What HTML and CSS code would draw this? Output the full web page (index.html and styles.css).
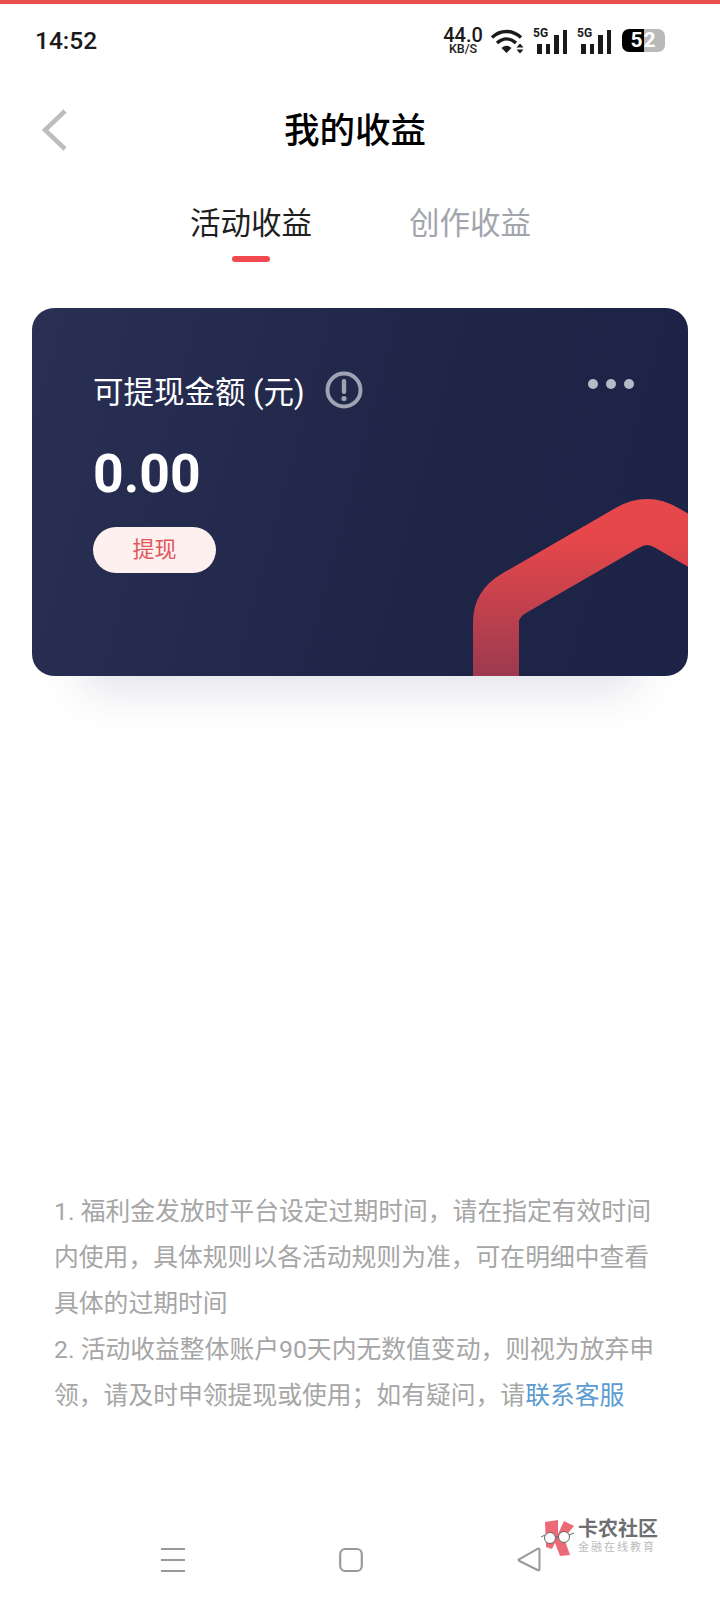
FILE: index.html
```html
<!DOCTYPE html>
<html lang="zh-CN">
<head>
    <meta charset="UTF-8">
    <meta name="viewport" content="width=device-width, initial-scale=1.0">
    <title>我的收益</title>
    <link rel="stylesheet" href="styles.css">
</head>
<body>
    <div class="app">
        <div class="status-bar">
            <span class="time">14:52</span>
            <div class="status-icons">
                <div class="net-speed">
                    <span class="net-value">44.0</span>
                    <span class="net-unit">KB/S</span>
                </div>
                <svg class="wifi" width="35" height="26" viewBox="0 0 35 26">
                    <path d="M2 9.5C10.500 1.500 22 1.500 31 9.500" fill="none" stroke="#1a1a1a" stroke-width="3.400"/>
                    <path d="M7 15C13 9.500 20 9.500 26 15" fill="none" stroke="#1a1a1a" stroke-width="3.400"/>
                    <path d="M11.500 20C15 17 18 17 21.500 20L16.500 25Z" fill="#1a1a1a"/>
                    <path d="M30 15.500L33.500 19.500H26.500ZM30 25.500L33.500 21.500H26.500Z" fill="#1a1a1a"/>
                </svg>
                <div class="signal">
                    <span class="signal-label">5G</span>
                    <div class="bars">
                        <i class="bar bar-1"></i><i class="bar bar-1"></i><i class="bar bar-2"></i><i class="bar bar-3"></i>
                    </div>
                </div>
                <div class="signal">
                    <span class="signal-label">5G</span>
                    <div class="bars">
                        <i class="bar bar-1"></i><i class="bar bar-1"></i><i class="bar bar-2"></i><i class="bar bar-3"></i>
                    </div>
                </div>
                <div class="battery">52</div>
            </div>
        </div>

        <div class="nav-bar">
            <svg class="back" width="26" height="44" viewBox="0 0 26 44">
                <path d="M23 3L3 22L23 41" fill="none" stroke="#bdbdbd" stroke-width="4.500"/>
            </svg>
            <h1 class="page-title">我的收益</h1>
        </div>

        <div class="tabs">
            <div class="tab tab-active">
                <span>活动收益</span>
                <i class="tab-line"></i>
            </div>
            <div class="tab">
                <span>创作收益</span>
            </div>
        </div>

        <div class="card">
            <svg class="card-deco" width="226" height="190" viewBox="0 0 226 190">
                <defs>
                    <linearGradient id="decoFade" gradientUnits="userSpaceOnUse" x1="0" y1="40" x2="0" y2="190">
                        <stop offset="0.1" stop-color="#e5474a"/>
                        <stop offset="1" stop-color="#9c3a50"/>
                    </linearGradient>
                </defs>
                <path d="M34 190V136Q34 117.700 52.500 107L165 42Q185 30 205 42L250 68" fill="none" stroke="url(#decoFade)" stroke-width="46"/>
            </svg>
            <div class="card-label">
                <span>可提现金额 (元)</span>
                <svg width="38" height="38" viewBox="0 0 38 38">
                    <circle cx="19" cy="19" r="16.500" fill="none" stroke="#a0a3b2" stroke-width="4"/>
                    <rect x="16.800" y="8" width="4.400" height="15" rx="2" fill="#a0a3b2"/>
                    <circle cx="19" cy="27.500" r="2.600" fill="#a0a3b2"/>
                </svg>
            </div>
            <div class="card-more"><i></i><i></i><i></i></div>
            <div class="card-amount">0.00</div>
            <button class="withdraw-btn">提现</button>
        </div>

        <div class="notes">
            1. 福利金发放时平台设定过期时间，请在指定有效时间<br>
            内使用，具体规则以各活动规则为准，可在明细中查看<br>
            具体的过期时间<br>
            2. 活动收益整体账户90天内无数值变动，则视为放弃申<br>
            领，请及时申领提现或使用；如有疑问，请<span class="link">联系客服</span>
        </div>

        <div class="bottom-nav">
            <svg width="24" height="26" viewBox="0 0 24 26">
                <path d="M0 2H24M0 13H24M0 24H24" stroke="#999" stroke-width="2.200"/>
            </svg>
            <svg width="24" height="26" viewBox="0 0 24 26">
                <rect x="1.200" y="2" width="21.600" height="22" rx="5" fill="none" stroke="#999" stroke-width="2.200"/>
            </svg>
            <svg width="24" height="26" viewBox="0 0 24 26">
                <path d="M22.500 2.500V22Q22.500 24 20.500 23L2.500 14Q0.500 13 2.500 12L20.500 1.800Q22.500 1 22.500 2.500Z" fill="none" stroke="#999" stroke-width="2"/>
            </svg>
        </div>

        <div class="watermark">
            <svg width="36" height="42" viewBox="0 0 36 42">
                <path d="M5 6L18 4L18 18L24 5L34 10L24 22L30 39L20 40L15 27L12 33L6 31Z" fill="#ec6a76"/>
                <path d="M1 21L5 19M15 21H19M29 19L34 17" stroke="#666" stroke-width="1"/>
                <circle cx="10" cy="22" r="5.500" fill="#fff" stroke="#666" stroke-width="1"/>
                <circle cx="24" cy="21" r="5.500" fill="#fff" stroke="#666" stroke-width="1"/>
            </svg>
            <div class="watermark-text">
                <span class="watermark-name">卡农社区</span>
                <span class="watermark-sub">金融在线教育</span>
            </div>
        </div>
    </div>
</body>
</html>
```

FILE: styles.css
```css
* {
    box-sizing: border-box;
}
body {
    margin: 0;
    background-color: #fff;
    font-family: Roboto, "Noto Sans CJK SC", sans-serif;
}
.app {
    position: relative;
    height: 1604px;
    overflow: hidden;
    border-top: 4px solid #e8504c;
}
.status-bar {
    display: flex;
    justify-content: space-between;
    align-items: center;
    height: 72px;
    padding: 1px 55px 0 35px;
}
.time {
    font-size: 24.500px;
    font-weight: 500;
    color: #1a1a1a;
}
.status-icons {
    display: flex;
    align-items: center;
}
.net-speed {
    display: flex;
    flex-direction: column;
    align-items: center;
    width: 40px;
    margin-left: -2px;
    color: #1a1a1a;
}
.net-value {
    font-size: 20px;
    font-weight: 500;
    line-height: 16px;
}
.net-unit {
    font-size: 12.500px;
    font-weight: 500;
    line-height: 11px;
}
.wifi {
    margin-left: 7px;
}
.signal {
    position: relative;
    width: 33px;
    height: 26px;
    margin-left: 8px;
}
.signal + .signal {
    margin-left: 11px;
}
.signal-label {
    position: absolute;
    left: 0;
    top: 0;
    font-size: 12px;
    font-weight: 700;
    line-height: 11px;
    color: #1a1a1a;
}
.bars {
    position: absolute;
    left: 4px;
    bottom: 0;
    display: flex;
    align-items: flex-end;
    gap: 4px;
}
.bar {
    display: block;
    width: 4.500px;
    background-color: #1a1a1a;
}
.bar-1 {
    height: 10px;
}
.bar-2 {
    height: 19px;
}
.bar-3 {
    height: 24px;
}
.battery {
    width: 43px;
    height: 23px;
    margin-left: 12px;
    border-radius: 7px;
    background: linear-gradient(to right, #000 52%, #b9b9b9 52%);
    color: #fff;
    font-size: 21px;
    font-weight: 700;
    line-height: 23px;
    letter-spacing: 1px;
    text-align: center;
}
.nav-bar {
    position: relative;
    display: flex;
    align-items: center;
    justify-content: center;
    height: 108px;
    padding: 0 10px 6px 0;
}
.back {
    position: absolute;
    left: 42px;
    top: 32px;
}
.page-title {
    margin: 0;
    font-size: 35.500px;
    font-weight: 500;
    color: #000;
}
.tabs {
    display: flex;
    gap: 97px;
    height: 124px;
    padding: 20px 0 0 190px;
}
.tab {
    display: flex;
    flex-direction: column;
    align-items: center;
    width: 122px;
    font-size: 30.500px;
    line-height: 40px;
    font-weight: 400;
    white-space: nowrap;
    color: #a3a5ad;
}
.tab-active {
    color: #1f1f1f;
}
.tab-line {
    display: block;
    width: 38px;
    height: 6px;
    margin-top: 12px;
    border-radius: 3px;
    background-color: #f04a4f;
}
.card {
    position: relative;
    width: 656px;
    height: 368px;
    margin-left: 32px;
    padding: 60px 0 0 61px;
    border-radius: 22px;
    background: linear-gradient(105deg, #2a3054 0%, #1e2547 60%, #1c2346 100%);
    box-shadow: 0 65px 40px -50px rgba(40, 50, 90, 0.13);
}
.card-deco {
    position: absolute;
    right: 0;
    bottom: 0;
    border-bottom-right-radius: 22px;
}
.card-label {
    display: flex;
    align-items: center;
    gap: 20px;
    height: 44px;
    font-size: 30.500px;
    color: #fff;
}
.card-more {
    position: absolute;
    top: 71px;
    right: 54px;
    display: flex;
    gap: 8px;
}
.card-more i {
    display: block;
    width: 10px;
    height: 10px;
    border-radius: 50%;
    background-color: #b5bac9;
}
.card-amount {
    margin-top: 30px;
    font-size: 53.500px;
    font-weight: 700;
    line-height: 64px;
    color: #fff;
}
.withdraw-btn {
    display: block;
    width: 123px;
    height: 46px;
    margin-top: 21px;
    padding: 0 0 7px;
    border: none;
    border-radius: 23px;
    background-color: #fff0f0;
    color: #e0565a;
    font-family: inherit;
    font-size: 22px;
}
.notes {
    margin-top: 513px;
    padding-left: 54px;
    font-size: 24.800px;
    line-height: 46px;
    color: #a6a6a6;
    white-space: nowrap;
}
.link {
    color: #5b9bd0;
}
.bottom-nav {
    display: flex;
    gap: 154px;
    margin-top: 128px;
    padding-left: 161px;
}
.watermark {
    position: absolute;
    left: 540px;
    top: 1512px;
    display: flex;
    gap: 2px;
}
.watermark-text {
    display: flex;
    flex-direction: column;
    padding-top: 1px;
    color: #6f6f73;
}
.watermark-name {
    font-size: 20px;
    font-weight: 700;
    line-height: 24px;
}
.watermark-sub {
    font-size: 11px;
    line-height: 14px;
    letter-spacing: 2px;
    color: #bcbcbc;
}
```
